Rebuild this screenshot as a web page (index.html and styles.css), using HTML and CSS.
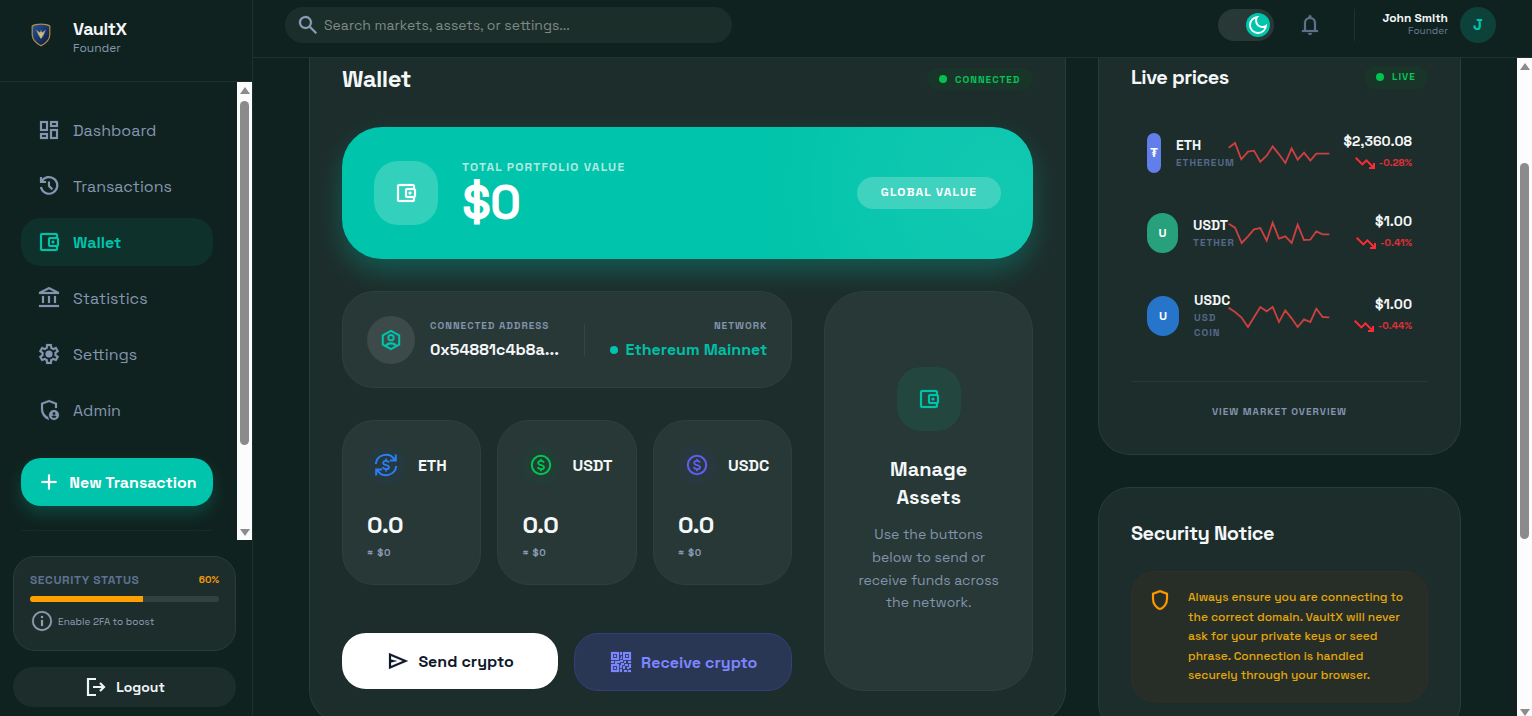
FILE: index.html
```html
<!DOCTYPE html>
<html lang="en">
<head>
  <meta charset="UTF-8" />
  <meta name="viewport" content="width=device-width, initial-scale=1" />
  <title>VaultX - Wallet</title>
  <link rel="stylesheet" href="styles.css">
</head>
<body>

  <!-- shared icons -->
  <svg class="sprite" width="0" height="0">
    <symbol id="i-wallet" viewBox="0 0 24 24">
      <path d="M21 7.28V5c0-1.1-.9-2-2-2H5c-1.11 0-2 .9-2 2v14c0 1.1.89 2 2 2h14c1.1 0 2-.9 2-2v-2.28c.59-.35 1-.98 1-1.72V9c0-.74-.41-1.37-1-1.72zM20 9v6h-7V9h7zM5 19V5h14v2h-6c-1.1 0-2 .9-2 2v6c0 1.1.9 2 2 2h6v2H5z"/>
      <circle cx="16" cy="12" r="1.5"/>
    </symbol>
    <symbol id="i-down" viewBox="0 0 24 24">
      <path d="M16 18v-2h2.6l-5.2-5.15-4 4L2 7.4 3.4 6l6 6 4-4 6.6 6.6V12h2v6z"/>
    </symbol>
    <symbol id="i-coin" viewBox="0 0 24 24">
      <circle cx="12" cy="12" r="9.2" fill="none" stroke="currentColor" stroke-width="2"/>
      <path d="M14.9 9.6C14.5 8.5 13.5 7.9 12 7.9c-1.700 0-2.800.8-2.800 2 0 2.900 5.800 1.300 5.800 4.300 0 1.200-1.200 2-3 2-1.700 0-2.800-.8-3.200-2.100M12 5.900v2M12 16.200v2" fill="none" stroke="currentColor" stroke-width="1.800"/>
    </symbol>
  </svg>

  <aside class="sidebar">
    <div class="brand">
      <svg class="brand-logo" viewBox="0 0 20 24">
        <defs>
          <linearGradient id="shield" x1="0" y1="0" x2="1" y2="1">
            <stop offset="0" stop-color="#2456a0"/>
            <stop offset="1" stop-color="#0a1536"/>
          </linearGradient>
        </defs>
        <path d="M10 1.200C13 1.200 16.500 1.600 18.800 3v8.500c0 5-4 8.800-8.800 11.300C5.200 20.300 1.200 16.500 1.200 11.500V3C3.500 1.600 7 1.200 10 1.200z" fill="url(#shield)" stroke="#b08c45" stroke-width="1.200"/>
        <path d="M5 6.500l4 3 1-3 1 3 4-3-2.500 6L10 16l-2.500-3.500z" fill="#a99c68"/>
        <path d="M10 9v6M7.500 9.500l2 3M12.500 9.500l-2 3" stroke="#e5dba9" stroke-width=".8"/>
      </svg>
      <div>
        <div class="brand-name">VaultX</div>
        <div class="brand-role">Founder</div>
      </div>
    </div>

    <div class="nav-wrap">
      <nav>
        <a href="#"><svg class="icon" viewBox="0 0 24 24"><path d="M19 5v2h-4V5h4M9 5v6H5V5h4m10 8v6h-4v-6h4M9 17v2H5v-2h4M21 3h-8v6h8V3zM11 3H3v10h8V3zm10 8h-8v10h8V11zm-10 4H3v6h8v-6z"/></svg><span>Dashboard</span></a>
        <a href="#"><svg class="icon line" viewBox="0 0 24 24"><path d="M4 3v5h5M4.600 7.700A8.300 8.300 0 1 1 3.900 13M12 7.500V12l3.400 3.400"/></svg><span>Transactions</span></a>
        <a href="#" class="active"><svg class="icon"><use href="#i-wallet"/></svg><span>Wallet</span></a>
        <a href="#"><svg class="icon" viewBox="0 0 24 24"><path d="M5 10h2v7H5zM11 10h2v7h-2zM17 10h2v7h-2zM2 19h20v2H2zM12 1L2 6v2h20V6L12 1zm0 2.250L17.300 6H6.700z"/></svg><span>Statistics</span></a>
        <a href="#"><svg class="icon" viewBox="0 0 24 24"><path fill-rule="evenodd" d="M9.250 22l-.4-3.200q-.33-.13-.61-.3t-.56-.38L4.700 19.370l-2.750-4.750 2.570-1.950q-.02-.17-.02-.34v-.67q0-.16.02-.33L1.950 9.380 4.700 4.630l2.980 1.250q.27-.2.57-.38t.6-.3l.4-3.200h5.500l.4 3.200q.33.13.61.3t.56.38l2.980-1.250 2.750 4.750-2.570 1.950q.02.17.02.34v.67q0 .16-.05.33l2.570 1.950-2.750 4.750-2.950-1.250q-.27.2-.57.38t-.6.3l-.4 3.200zm1.750-2h1.980l.35-2.650q.77-.2 1.440-.59t1.210-.94l2.480 1.030.97-1.700-2.150-1.620q.12-.35.17-.74t.05-.79-.05-.79-.17-.74l2.150-1.620-.98-1.700-2.470 1.050q-.55-.58-1.220-.97t-1.430-.58L13 4h-1.980l-.35 2.650q-.77.2-1.440.59t-1.210.94L5.550 7.150l-.97 1.700 2.150 1.600q-.12.37-.17.75t-.05.8q0 .4.050.78t.17.74l-2.150 1.630.97 1.700 2.480-1.050q.55.58 1.210.97t1.440.58z"/><circle cx="12" cy="12" r="3.500"/></svg><span>Settings</span></a>
        <a href="#"><svg class="icon" viewBox="0 0 24 24"><path d="M12 4.100l6 2.250V10h2V5l-8-3-8 3v6.100c0 5.050 3.400 9.750 8 10.900l-1-3c-3-1.500-5-4.600-5-7.900V6.350z"/><path fill-rule="evenodd" d="M17 12a5 5 0 1 0 0 10 5 5 0 0 0 0-10zm0 2a1.500 1.500 0 1 1 0 3 1.500 1.500 0 0 1 0-3zm0 6a3 3 0 0 1-2.500-1.300c.2-.7 1.500-1.100 2.500-1.100s2.300.4 2.500 1.100A3 3 0 0 1 17 20z"/></svg><span>Admin</span></a>
        <button class="new-tx"><svg class="icon" viewBox="0 0 24 24"><path d="M11 13H4.500v-2H11V4.500h2V11h6.500v2H13v6.500h-2z"/></svg><span>New Transaction</span></button>
        <hr>
      </nav>
      <div class="scrollbar">
        <i class="up"></i><i class="thumb nav-thumb"></i><i class="down"></i>
      </div>
    </div>

    <div class="side-bottom">
      <div class="status">
        <div class="status-head"><span>SECURITY STATUS</span><b>60%</b></div>
        <div class="bar"><div style="width:60%"></div></div>
        <div class="status-tip"><svg class="icon" viewBox="0 0 24 24"><path d="M11 17h2v-6h-2zm0-8h2V7h-2zM12 2a10 10 0 1 0 0 20 10 10 0 0 0 0-20zm0 18.300a8.300 8.300 0 1 1 0-16.600 8.300 8.300 0 0 1 0 16.600z"/></svg><span>Enable 2FA to boost</span></div>
      </div>
      <button class="logout"><svg class="icon line" viewBox="0 0 24 24"><path d="M12 4H4v16h8M9 12h11M16 8l4 4-4 4"/></svg><span>Logout</span></button>
    </div>
  </aside>

  <div class="page">
    <header>
      <div class="search">
        <svg class="icon" viewBox="0 0 24 24"><path d="M19.600 21l-6.300-6.300A6.500 6.500 0 1 1 14.700 13.300L21 19.600zM9.500 14a4.500 4.500 0 1 0 0-9 4.500 4.500 0 0 0 0 9z"/></svg>
        <span>Search markets, assets, or settings...</span>
      </div>
      <div class="tools">
        <div class="toggle"><div class="knob"><svg viewBox="0 0 24 24"><path d="M9.370 5.510A7.350 7.350 0 0 0 9.100 7.500c0 4.080 3.320 7.400 7.400 7.400.68 0 1.350-.09 1.990-.27A7.014 7.014 0 0 1 12 19c-3.860 0-7-3.140-7-7 0-2.930 1.810-5.450 4.370-6.490zM12 3a9 9 0 1 0 9 9c0-.46-.04-.92-.1-1.360a5.389 5.389 0 0 1-4.400 2.260 5.403 5.403 0 0 1-3.140-9.800c-.44-.06-.9-.1-1.360-.1z"/></svg></div></div>
        <svg class="icon bell" viewBox="0 0 24 24"><path d="M4 19v-2h2v-7a6 6 0 0 1 4.500-5.800v-.7a1.500 1.500 0 0 1 3 0v.7A6 6 0 0 1 18 10v7h2v2zM12 22a2 2 0 0 1-2-2h4a2 2 0 0 1-2 2zM8 17h8v-7a4 4 0 0 0-8 0z"/></svg>
        <div class="sep"></div>
        <div class="user"><b>John Smith</b><span>Founder</span></div>
        <div class="avatar">J</div>
      </div>
    </header>

    <div class="content">
      <main>
        <section class="card wallet">
          <div class="card-head">
            <h1>Wallet</h1>
            <span class="pill connected"><i></i>CONNECTED</span>
          </div>

          <div class="hero">
            <div class="hero-icon"><svg class="icon"><use href="#i-wallet"/></svg></div>
            <div class="hero-text">
              <div class="hero-label">TOTAL PORTFOLIO VALUE</div>
              <div class="hero-value">$0</div>
            </div>
            <span class="hero-pill">GLOBAL VALUE</span>
          </div>

          <div class="wallet-grid">
            <div class="wallet-left">
              <div class="box address">
                <div class="address-icon"><svg class="icon" viewBox="0 0 24 24"><path fill="none" stroke="currentColor" stroke-width="2" d="M12 2.800l8.200 4.600v9.200L12 21.200l-8.200-4.600V7.400z"/><circle cx="12" cy="9.700" r="2.700" fill="none" stroke="currentColor" stroke-width="1.900"/><path d="M6 17.200c1.500-2 3.500-2.900 6-2.900s4.500.9 6 2.900l-2 1.100c-1-1.100-2.300-1.700-4-1.700s-3 .6-4 1.700z"/></svg></div>
                <div class="address-text"><div class="label">CONNECTED ADDRESS</div><div class="value">0x54881c4b8a...</div></div>
                <div class="sep"></div>
                <div class="network"><div class="label">NETWORK</div><div class="value"><i></i><span>Ethereum Mainnet</span></div></div>
              </div>

              <div class="tokens">
                <div class="box token">
                  <div class="token-head"><div class="token-icon blue"><svg class="icon" viewBox="0 0 24 24"><path fill="none" stroke="currentColor" stroke-width="2" d="M1.800 11A10.200 10.200 0 0 1 20.500 6.500M22.200 13A10.200 10.200 0 0 1 3.500 17.500M21.800 1.500v6h-6M2.200 22.500v-6h6"/><path d="M14.900 9.600C14.500 8.500 13.500 7.900 12 7.900c-1.700 0-2.800.8-2.800 2 0 2.900 5.800 1.300 5.800 4.300 0 1.200-1.200 2-3 2-1.700 0-2.800-.8-3.200-2.100M12 5.500v2.400M12 16.200v2.400" fill="none" stroke="currentColor" stroke-width="1.800"/></svg></div><b>ETH</b></div>
                  <div class="amount">0.0</div><div class="approx">≈ $0</div>
                </div>
                <div class="box token">
                  <div class="token-head"><div class="token-icon green"><svg class="icon"><use href="#i-coin"/></svg></div><b>USDT</b></div>
                  <div class="amount">0.0</div><div class="approx">≈ $0</div>
                </div>
                <div class="box token">
                  <div class="token-head"><div class="token-icon violet"><svg class="icon"><use href="#i-coin"/></svg></div><b>USDC</b></div>
                  <div class="amount">0.0</div><div class="approx">≈ $0</div>
                </div>
              </div>

              <div class="actions">
                <button class="send"><svg class="icon" viewBox="0 0 24 24"><path d="M3 20V4l19 8zm2-3l11.850-5L5 7v3.500l6 1.500-6 1.500z"/></svg><span>Send crypto</span></button>
                <button class="receive"><svg class="icon" viewBox="0 0 24 24"><path fill-rule="evenodd" d="M2 2h8v8H2zm2 2v4h4V4zM14 2h8v8h-8zm2 2v4h4V4zM2 14h8v8H2zm2 2v4h4v-4z"/><path fill-rule="evenodd" d="M5 5h2v2H5zM17 5h2v2h-2zM5 17h2v2H5zM11 2h2v3h-2zM12 6h1v3h-2V8h1zM2 11h3v2H2zM6 11h5v2H8v1H6zM11 10h3v2h-3zM15 11h2v2h-2zM19 11h3v2h-3zM12 13h3v2h-2v3h-2v-3h1zM16 14h3v2h-3zM20 14h2v4h-2v1h-2v-2h2zM14 16h2v3h-2zM11 19h2v3h-2zM15 20h3v2h-3zM19 20h3v2h-3z"/></svg><span>Receive crypto</span></button>
              </div>
            </div>

            <div class="box manage">
              <div class="manage-icon"><svg class="icon"><use href="#i-wallet"/></svg></div>
              <h3>Manage<br>Assets</h3>
              <p>Use the buttons<br>below to send or<br>receive funds across<br>the network.</p>
            </div>
          </div>
        </section>

        <div class="side-col">
          <section class="card prices">
            <div class="card-head">
              <h2>Live prices</h2>
              <span class="pill live"><i></i><span>LIVE</span></span>
            </div>
            <div class="price-list">
              <div class="price-row">
                <div class="coin eth">₮</div>
                <div class="coin-name"><b>ETH</b><span>ETHEREUM</span></div>
                <svg class="spark" viewBox="0 0 306 120"><polyline points="2,44 21,30 40,79 60,56 78,53 97,86 116,68 134,40 153,64 172,90 191,46 209,80 228,59 247,83 265,62 304,62"/></svg>
                <div class="price"><b>$2,360.08</b><span><svg><use href="#i-down"/></svg>-0.28%</span></div>
              </div>
              <div class="price-row">
                <div class="coin usdt">U</div>
                <div class="coin-name"><b>USDT</b><span>TETHER</span></div>
                <svg class="spark" viewBox="0 0 306 120"><polyline points="2,32 21,44 41,90 60,70 78,49 97,45 116,83 134,29 153,77 172,70 191,90 209,35 228,81 247,80 265,55 284,64 304,64"/></svg>
                <div class="price"><b>$1.00</b><span><svg><use href="#i-down"/></svg>-0.41%</span></div>
              </div>
              <div class="price-row">
                <div class="coin usdc">U</div>
                <div class="coin-name"><b>USDC</b><span>USD<br>COIN</span></div>
                <svg class="spark" viewBox="0 0 306 120"><polyline points="2,35 21,48 40,64 60,93 78,64 97,33 116,46 134,33 153,78 172,43 191,67 209,93 228,70 247,78 265,38 284,63 304,64"/></svg>
                <div class="price"><b>$1.00</b><span><svg><use href="#i-down"/></svg>-0.44%</span></div>
              </div>
            </div>
            <a href="#" class="overview"><span>VIEW MARKET OVERVIEW</span></a>
          </section>

          <section class="card security">
            <h2>Security Notice</h2>
            <div class="notice">
              <svg class="icon" viewBox="0 0 24 24"><path d="M12 22q-3.470-.88-5.740-3.990T4 11.100V5l8-3 8 3v6.100q0 3.800-2.260 6.910T12 22zm0-2.100q2.600-.82 4.300-3.300t1.700-5.500V6.380l-6-2.250-6 2.250v4.720q0 3.020 1.700 5.500t4.300 3.300z"/></svg>
              <p>Always ensure you are connecting to<br>the correct domain. VaultX will never<br>ask for your private keys or seed<br>phrase. Connection is handled<br>securely through your browser.</p>
            </div>
          </section>
        </div>
      </main>
      <div class="scrollbar">
        <i class="up"></i><i class="thumb page-thumb"></i><i class="down"></i>
      </div>
    </div>
  </div>

</body>
</html>
```
FILE: styles.css
```css
* {
  box-sizing: border-box;
}

body {
  margin: 0;
  height: 716px;
  display: flex;
  overflow: hidden;
  font-family: "Space Grotesk", Inter, sans-serif;
  background: #10221f;
  color: #f4f7f8;
}

h1, h2, h3, p {
  margin: 0;
}

a {
  text-decoration: none;
  color: inherit;
}

button {
  font-family: inherit;
  border: none;
  padding: 0;
  display: flex;
  align-items: center;
  justify-content: center;
  cursor: pointer;
}

span, b, .label, .value {
  white-space: nowrap;
}

.sprite {
  position: absolute;
}

.icon {
  width: 24px;
  height: 24px;
  flex: none;
  fill: currentColor;
  stroke: currentColor;
  stroke-width: 0.2;
}

.icon.line {
  fill: none;
  stroke: currentColor;
  stroke-width: 2.2;
}

/* sidebar */
.sidebar {
  width: 253px;
  flex: none;
  display: flex;
  flex-direction: column;
  border-right: 1px solid #1d302d;
}

.brand {
  height: 82px;
  display: flex;
  align-items: center;
  padding: 0 0 6px 31px;
  gap: 22px;
  border-bottom: 1px solid #1d302d;
}

.brand-logo {
  width: 20px;
  height: 24px;
  margin-top: -5px;
}

.brand-name {
  font-size: 18px;
  line-height: 22px;
  font-weight: 700;
  letter-spacing: -0.45px;
}

.brand-role {
  font-size: 12px;
  line-height: 17px;
  color: #8496ad;
}

.nav-wrap {
  height: 458px;
  display: flex;
}

nav {
  width: 237px;
  padding: 24px 24px 0 21px;
}

nav a {
  height: 48px;
  margin-bottom: 8px;
  padding-left: 16px;
  display: flex;
  align-items: center;
  gap: 12px;
  border-radius: 20px;
  font-size: 16px;
  color: #8496b0;
}

nav a.active {
  background: #0e312c;
  color: #00c4aa;
  font-weight: 700;
}

.new-tx {
  width: 192px;
  height: 48px;
  margin-top: 24px;
  gap: 8px;
  border-radius: 20px;
  background: #00c4ab;
  color: #fff;
  font-size: 16px;
  font-weight: 700;
  box-shadow: 0 8px 16px rgba(0, 196, 171, 0.22);
}

nav hr {
  border: 0;
  height: 1px;
  margin: 24px 0 0;
  background: #172a27;
}

.scrollbar {
  width: 15px;
  flex: none;
  background: #fcfcfc;
  display: flex;
  flex-direction: column;
  align-items: center;
}

.scrollbar .up {
  margin-top: 5px;
  border: 5px solid transparent;
  border-top: 0;
  border-bottom: 7px solid #8b8b8b;
}

.scrollbar .down {
  margin: auto 0 4px;
  border: 5px solid transparent;
  border-bottom: 0;
  border-top: 7px solid #8b8b8b;
}

.content .scrollbar .down {
  margin-bottom: 0;
}

.thumb {
  width: 9px;
  border-radius: 5px;
  background: #8b8b8b;
}

.nav-thumb {
  height: 344px;
  margin-top: 7px;
}

.side-bottom {
  padding: 15.5px 16px 0 13px;
}

.status {
  height: 95px;
  border: 1px solid #2a3b38;
  border-radius: 22px;
  background: #1d2d2b;
  padding: 15.5px 16px 0;
}

.status-head {
  display: flex;
  justify-content: space-between;
  font-size: 12px;
  line-height: 16px;
  font-weight: 600;
  letter-spacing: 0.6px;
  color: #5f7190;
}

.status-head b {
  font-size: 10px;
  line-height: 15px;
  letter-spacing: 0;
  color: #f59a0a;
}

.bar {
  height: 6px;
  margin-top: 8px;
  border-radius: 3px;
  background: #334240;
  overflow: hidden;
}

.bar div {
  height: 100%;
  background: #ff9f00;
}

.status-tip {
  display: flex;
  align-items: center;
  gap: 4px;
  margin-top: 7px;
  font-size: 10px;
  color: #8e9db5;
}

.logout {
  width: 223px;
  height: 40px;
  margin-top: 16px;
  gap: 8px;
  border-radius: 20px;
  background: #1c2d2b;
  color: #f0f4f8;
  font-size: 14px;
  font-weight: 700;
}

/* top bar */
.page {
  flex: 1;
  min-width: 0;
  display: flex;
  flex-direction: column;
}

header {
  height: 58px;
  flex: none;
  display: flex;
  justify-content: space-between;
  padding: 7px 36px 0 32px;
  border-bottom: 1px solid #1f322f;
}

.search {
  width: 447px;
  height: 36px;
  border-radius: 18px;
  background: #1c2e2a;
  display: flex;
  align-items: center;
  padding-left: 11px;
  gap: 4px;
  font-size: 14px;
  color: #7e8986;
}

.search .icon {
  color: #8d9cba;
}

.tools {
  height: 36px;
  display: flex;
  align-items: center;
}

.toggle {
  width: 56px;
  height: 32px;
  border-radius: 16px;
  background: #273836;
  display: flex;
  justify-content: flex-end;
  padding: 4px;
}

.knob {
  width: 24px;
  height: 24px;
  border-radius: 50%;
  background: #00c4ab;
}

.knob svg {
  display: block;
  width: 24px;
  height: 24px;
  fill: #fff;
}

.bell {
  margin: 0 32px 0 24px;
  color: #5f708c;
}

.tools .sep {
  width: 1px;
  height: 32px;
  background: #22332f;
}

.user {
  width: 93px;
  margin-top: -2px;
  text-align: right;
  display: flex;
  flex-direction: column;
}

.user b {
  font-size: 12px;
  line-height: 14px;
}

.user span {
  font-size: 10px;
  line-height: 12px;
  color: #6b7b92;
}

.avatar {
  width: 36px;
  height: 36px;
  margin-left: 12px;
  border-radius: 50%;
  background: #0c423a;
  color: #00c4ab;
  font-size: 16px;
  line-height: 36px;
  text-align: center;
  font-weight: 700;
}

/* page content */
.content {
  height: 658px;
  display: flex;
}

main {
  flex: 1;
  display: flex;
  align-items: flex-start;
  gap: 32px;
  padding-left: 56px;
}

.card {
  background: #1d2d2b;
  border: 1px solid #2a3b38;
}

.card-head {
  display: flex;
  align-items: center;
  justify-content: space-between;
}

.wallet {
  width: 757px;
  height: 664px;
  border-top: 0;
  border-radius: 0 0 32px 32px;
  padding: 5px 32px 0;
}

.wallet .card-head {
  height: 32px;
}

h1 {
  font-size: 24px;
  line-height: 32px;
  font-weight: 700;
  letter-spacing: -0.6px;
}

.pill {
  display: flex;
  align-items: center;
  gap: 8px;
  font-size: 10px;
  font-weight: 700;
  border-radius: 12px;
  background: #19352a;
  color: #07c257;
}

.pill i {
  width: 8px;
  height: 8px;
  border-radius: 50%;
  background: #00c34e;
}

.connected {
  width: 106px;
  height: 22px;
  padding-left: 12px;
  letter-spacing: 1px;
}

.live {
  width: 64px;
  height: 23px;
  padding-left: 12px;
  letter-spacing: 1px;
}

.live span {
  margin-top: -2px;
}

.hero {
  height: 132px;
  margin-top: 32px;
  border-radius: 40px;
  background: radial-gradient(circle at 660px 60px, rgba(255, 255, 255, 0.07) 0, rgba(255, 255, 255, 0.05) 100px, transparent 240px) #00c4ab;
  box-shadow: 0 12px 28px rgba(0, 196, 171, 0.3);
  display: flex;
  align-items: center;
  padding: 0 32px;
  color: #fff;
}

.hero-icon {
  width: 64px;
  height: 64px;
  border-radius: 24px;
  background: #33d0bc;
  display: flex;
  align-items: center;
  justify-content: center;
}

.hero-text {
  margin-left: 24px;
  height: 68px;
  flex: 1;
}

.hero-label {
  font-size: 12px;
  line-height: 16px;
  font-weight: 700;
  letter-spacing: 1.2px;
  color: #b0eae1;
}

.hero-value {
  font-size: 48px;
  line-height: 55px;
  font-weight: 700;
  letter-spacing: -1.2px;
}

.hero-pill {
  width: 144px;
  height: 32px;
  border-radius: 16px;
  background: #3fd2bf;
  text-align: center;
  font-size: 12px;
  line-height: 31px;
  font-weight: 700;
  letter-spacing: 1.2px;
}

.wallet-grid {
  display: flex;
  gap: 32px;
  margin-top: 32px;
}

.wallet-left {
  width: 451px;
}

.box {
  background: #273836;
  border: 1px solid #2e403d;
}

.address {
  height: 97px;
  border-radius: 32px;
  padding: 0 24px;
  display: flex;
  align-items: center;
}

.address-icon {
  width: 48px;
  height: 48px;
  border-radius: 50%;
  background: #3c4b49;
  color: #00c4ab;
  display: flex;
  align-items: center;
  justify-content: center;
}

.address-text {
  width: 154px;
  margin-left: 15px;
}

.label {
  font-size: 10px;
  line-height: 15px;
  font-weight: 700;
  letter-spacing: 1px;
  color: #8393ad;
}

.value {
  margin-top: 5px;
  font-size: 16px;
  line-height: 24px;
  font-weight: 700;
}

.address .sep {
  width: 1px;
  height: 32px;
  background: #344542;
}

.network {
  margin-left: auto;
  text-align: right;
}

.network .value {
  display: flex;
  align-items: center;
  gap: 8px;
  color: #00bfa6;
}

.network i {
  width: 8px;
  height: 8px;
  border-radius: 50%;
  background: #00c4ab;
}

.tokens {
  display: grid;
  grid-template-columns: repeat(3, minmax(0, 1fr));
  gap: 16px;
  margin-top: 32px;
}

.token {
  height: 165px;
  border-radius: 32px;
  padding: 24px;
}

.token-head {
  display: flex;
  align-items: center;
  gap: 12px;
  font-size: 16px;
}

.token:not(:first-child) .token-head {
  gap: 11px;
}

.token-icon {
  width: 40px;
  height: 40px;
  flex: none;
  margin-left: -1px;
  border-radius: 50%;
  display: flex;
  align-items: center;
  justify-content: center;
}

.blue {
  background: #26393f;
  color: #2b7ff6;
}

.green {
  background: #233c36;
  color: #00c74f;
}

.violet {
  background: #29383f;
  color: #615ff2;
}

.amount {
  margin-top: 24px;
  font-size: 24px;
  line-height: 32px;
  font-weight: 700;
  letter-spacing: -0.6px;
}

.approx {
  margin-top: 4px;
  font-size: 10px;
  line-height: 15px;
  font-weight: 700;
  letter-spacing: 0.7px;
  color: #8c9bb3;
}

.actions {
  display: flex;
  gap: 16px;
  margin-top: 48px;
}

.actions button {
  flex: 1;
  height: 56px;
  border-radius: 24px;
  gap: 8px;
  font-size: 16px;
  font-weight: 700;
}

.actions .send {
  background: #fff;
  color: #0f172a;
}

.actions .receive {
  height: 58px;
  background: #2a3754;
  border: 1px solid #333f78;
  color: #7c86ff;
}

.manage {
  width: 209px;
  height: 400px;
  border-radius: 40px;
  display: flex;
  flex-direction: column;
  align-items: center;
  padding-top: 75px;
  text-align: center;
}

.manage-icon {
  width: 64px;
  height: 64px;
  border-radius: 24px;
  background: #23463f;
  color: #00c4ab;
  display: flex;
  align-items: center;
  justify-content: center;
}

.manage h3 {
  margin-top: 24px;
  font-size: 20px;
  line-height: 28px;
  font-weight: 700;
}

.manage p {
  margin-top: 12px;
  font-size: 14px;
  line-height: 22.8px;
  color: #8393ad;
}

/* right column */
.side-col {
  width: 363px;
}

.prices {
  height: 397px;
  border-top: 0;
  border-radius: 0 0 32px 32px;
  padding: 5px 32px 0;
}

.prices .card-head {
  height: 28px;
}

h2 {
  font-size: 20px;
  line-height: 28px;
  font-weight: 700;
  letter-spacing: -0.5px;
}

.price-list {
  margin-top: 24px;
  display: flex;
  flex-direction: column;
  gap: 4px;
}

.price-row {
  display: flex;
  align-items: center;
  padding: 16px;
}

.coin {
  height: 40px;
  flex: none;
  border-radius: 20px;
  margin-right: 15px;
  text-align: center;
  font-size: 12px;
  line-height: 40px;
  font-weight: 700;
  color: #fff;
}

.eth {
  width: 14px;
  background: #627eea;
}

.usdt {
  width: 31px;
  background: #26a17b;
}

.usdc {
  width: 32px;
  background: #2775ca;
}

.coin-name {
  flex: 1;
  min-width: 0;
}

.coin-name b {
  display: block;
  font-size: 14px;
  line-height: 19px;
}

.coin-name span {
  display: block;
  font-size: 10px;
  line-height: 15px;
  font-weight: 700;
  letter-spacing: 1px;
  color: #56688a;
}

.spark {
  width: 102px;
  height: 40px;
  flex: none;
}

.spark polyline {
  fill: none;
  stroke: #cb4040;
  stroke-width: 5.5;
}

.price {
  width: 82px;
  flex: none;
  text-align: right;
}

.price b {
  display: block;
  font-size: 14px;
  line-height: 20px;
}

.price span {
  display: flex;
  align-items: center;
  justify-content: flex-end;
  gap: 2px;
  font-size: 10px;
  line-height: 24px;
  font-weight: 700;
  color: #e0303a;
}

.price svg {
  width: 24px;
  height: 24px;
  fill: #fb2c36;
}

.overview {
  display: flex;
  justify-content: center;
  margin-top: 25px;
  padding-top: 22px;
  border-top: 1px solid #273936;
  font-size: 10px;
  line-height: 15px;
  font-weight: 700;
  letter-spacing: 1px;
  color: #8393ad;
}

.security {
  height: 248px;
  margin-top: 32px;
  border-radius: 32px;
  padding: 31px 32px 0;
}

.notice {
  height: 131px;
  margin-top: 24px;
  border: 1px solid #352e27;
  border-radius: 24px;
  background: #272e28;
  padding: 16px 0 0 16px;
  display: flex;
  gap: 16px;
}

.notice .icon {
  color: #fe9a00;
}

.notice p {
  font-size: 12px;
  line-height: 19.5px;
  font-weight: 500;
  white-space: nowrap;
  color: #e3a70a;
}

.page-thumb {
  height: 376px;
  margin-top: 93px;
}
```
